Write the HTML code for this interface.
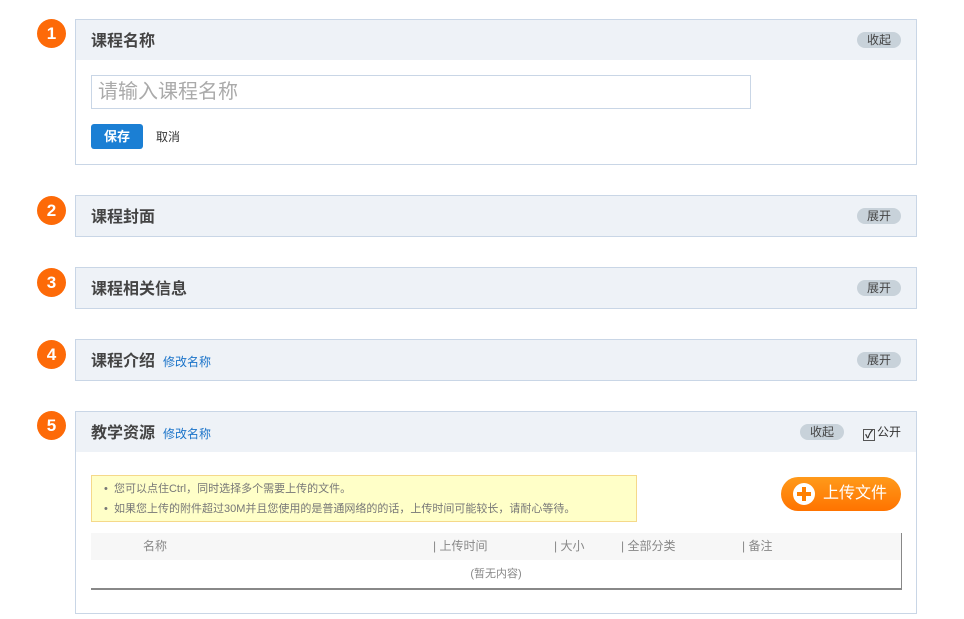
<!DOCTYPE html><html><head><meta charset="utf-8"><style>
*{margin:0;padding:0;box-sizing:border-box}
body{width:964px;height:619px;background:#fff;font-family:"Liberation Sans","Noto Sans CJK SC",sans-serif;position:relative;overflow:hidden;color:#333}
.n{position:absolute;left:37px;width:29px;height:29px;border-radius:50%;background:#fd6a08;color:#fff;font-weight:bold;font-size:17px;text-align:center;line-height:29px}
.p{position:absolute;left:75px;width:842px;border:1px solid #c9d6e6;background:#fff}
.h{height:40px;background:#eef2f7;position:relative}
.t{position:absolute;left:15px;top:2px;line-height:40px;height:40px;font-size:16px;font-weight:bold;color:#444}
.l{font-size:12px;color:#1a73c9;font-weight:normal;margin-left:8px}
.b{position:absolute;right:15px;top:12px;width:44px;height:16px;border-radius:8px;background:#c8d2da;font-size:12px;line-height:16px;text-align:center;color:#444}
</style></head><body>
<div class="n" style="top:19px">1</div>
<div class="p" style="top:19px;height:146px"><div class="h"><div class="t">课程名称</div><div class="b">收起</div></div>
<div style="position:absolute;left:15px;top:55px;width:660px;height:34px;border:1px solid #c9d6e6;font-size:20px;color:#aaa;padding:3px 6px;line-height:26px">请输入课程名称</div>
<div style="position:absolute;left:15px;top:104px;width:52px;height:25px;background:#1b7fd4;border-radius:3px;color:#fff;font-size:13px;font-weight:bold;text-align:center;line-height:25px">保存</div>
<div style="position:absolute;left:80px;top:108px;font-size:12px;color:#333">取消</div></div>
<div class="n" style="top:196px">2</div>
<div class="p" style="top:195px;height:42px"><div class="h"><div class="t">课程封面</div><div class="b">展开</div></div></div>
<div class="n" style="top:268px">3</div>
<div class="p" style="top:267px;height:42px"><div class="h"><div class="t">课程相关信息</div><div class="b">展开</div></div></div>
<div class="n" style="top:340px">4</div>
<div class="p" style="top:339px;height:42px"><div class="h"><div class="t">课程介绍<span class="l">修改名称</span></div><div class="b">展开</div></div></div>
<div class="n" style="top:411px">5</div>
<div class="p" style="top:411px;height:203px"><div class="h"><div class="t">教学资源<span class="l">修改名称</span></div><div class="b" style="right:72px">收起</div>
<div style="position:absolute;right:15px;top:12px;font-size:12px;line-height:16px;color:#333"><span style="display:inline-block;width:12px;height:12px;border:1px solid #555;vertical-align:-2px;margin-right:2px;font-size:11px;line-height:10px;text-align:center;font-weight:bold">✓</span>公开</div></div>
<div style="position:absolute;left:15px;top:63px;width:546px;height:47px;background:#ffffc8;border:1px solid #f5d98a;font-size:11px;color:#777;padding:3px 0 0 12px;line-height:20px">
<div>•&nbsp; 您可以点住Ctrl，同时选择多个需要上传的文件。</div><div>•&nbsp; 如果您上传的附件超过30M并且您使用的是普通网络的的话，上传时间可能较长，请耐心等待。</div></div>
<div style="position:absolute;left:705px;top:65px;width:120px;height:34px;border-radius:17px;background:linear-gradient(#ff9a1a,#ff7300);color:#fff;font-size:16px;line-height:34px;padding-left:42px">上传文件
<div style="position:absolute;left:12px;top:6px;width:22px;height:22px;border-radius:50%;background:#fff"><div style="position:absolute;left:4px;top:9px;width:14px;height:4px;background:#ff8000"></div><div style="position:absolute;left:9px;top:4px;width:4px;height:14px;background:#ff8000"></div></div></div>
<div style="position:absolute;left:15px;top:121px;width:811px;height:57px;border-right:1px solid #888;border-bottom:2px solid #888;font-size:12px;color:#888">
<div style="height:27px;background:#f7f7f7;position:relative;line-height:27px">
<span style="position:absolute;left:52px">名称</span><span style="position:absolute;left:342px">| 上传时间</span><span style="position:absolute;left:463px">| 大小</span><span style="position:absolute;left:530px">| 全部分类</span><span style="position:absolute;left:651px">| 备注</span></div>
<div style="text-align:center;line-height:28px;font-size:11px">(暂无内容)</div></div>
</div>
</body></html>
